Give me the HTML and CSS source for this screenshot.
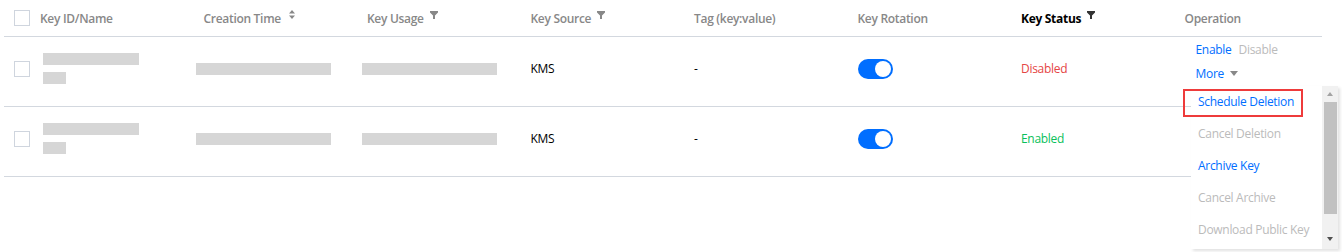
FILE: index.html
```html
<!DOCTYPE html>
<html lang="en">
<head>
    <meta charset="UTF-8" />
    <title>Key List</title>
    <link rel="stylesheet" href="styles.css">
</head>
<body>
    <div class="page">
        <div class="key-table">
            <!-- Header -->
            <div class="row head">
                <div class="cell check"><span class="checkbox"></span></div>
                <div class="cell">Key ID/Name</div>
                <div class="cell">Creation Time
                    <svg class="icon sort" width="6" height="9" viewBox="0 0 6 9"><path d="M3 0 L6 3.6 H0 Z M0 5.4 H6 L3 9 Z" /></svg>
                </div>
                <div class="cell">Key Usage
                    <svg class="icon filter" width="8" height="8" viewBox="0 0 8 8"><path d="M0 0 H8 V1.4 L5 4.4 V8 H3 V4.4 L0 1.4 Z" /></svg>
                </div>
                <div class="cell">Key Source
                    <svg class="icon filter" width="8" height="8" viewBox="0 0 8 8"><path d="M0 0 H8 V1.4 L5 4.4 V8 H3 V4.4 L0 1.4 Z" /></svg>
                </div>
                <div class="cell">Tag (key:value)</div>
                <div class="cell">Key Rotation</div>
                <div class="cell active">Key Status
                    <svg class="icon filter" width="8" height="8" viewBox="0 0 8 8"><path d="M0 0 H8 V1.4 L5 4.4 V8 H3 V4.4 L0 1.4 Z" /></svg>
                </div>
                <div class="cell">Operation</div>
            </div>

            <!-- Row 1 -->
            <div class="row">
                <div class="cell check"><span class="checkbox"></span></div>
                <div class="cell">
                    <div class="name-block">
                        <span class="blur w96"></span>
                        <span class="blur w23"></span>
                    </div>
                </div>
                <div class="cell"><span class="blur w135 shift8"></span></div>
                <div class="cell"><span class="blur w135 shift5"></span></div>
                <div class="cell">KMS</div>
                <div class="cell">-</div>
                <div class="cell"><span class="switch"></span></div>
                <div class="cell status-off">Disabled</div>
                <div class="cell ops">
                    <div class="ops-line"><a class="link">Enable</a><span class="link-off">Disable</span></div>
                    <div class="ops-line"><a class="link">More</a><span class="caret"></span></div>
                </div>
            </div>

            <!-- Row 2 (operation cell sits under the open menu) -->
            <div class="row">
                <div class="cell check"><span class="checkbox"></span></div>
                <div class="cell">
                    <div class="name-block">
                        <span class="blur w96"></span>
                        <span class="blur w23"></span>
                    </div>
                </div>
                <div class="cell"><span class="blur w135 shift8"></span></div>
                <div class="cell"><span class="blur w135 shift5"></span></div>
                <div class="cell">KMS</div>
                <div class="cell">-</div>
                <div class="cell"><span class="switch"></span></div>
                <div class="cell status-on">Enabled</div>
                <div class="cell ops"></div>
            </div>
        </div>

        <!-- "More" dropdown menu -->
        <div class="menu">
            <ul class="menu-list">
                <li class="menu-item marked">Schedule Deletion</li>
                <li class="menu-item off">Cancel Deletion</li>
                <li class="menu-item">Archive Key</li>
                <li class="menu-item off">Cancel Archive</li>
                <li class="menu-item off">Download Public Key</li>
            </ul>
            <div class="scrollbar">
                <span class="arrow up"></span>
                <span class="thumb"></span>
                <span class="arrow down"></span>
            </div>
        </div>
    </div>
</body>
</html>
```

FILE: styles.css
```css
/* Variables */
:root {
    --blue: #006eff;
    --red: #e54545;
    --green: #0abf5b;
    --line: #d3d8df;
    --head-text: #888888;
    --muted: #bbbbbb;
    --font: 'Segoe UI', 'Open Sans', 'Noto Sans', sans-serif;
}

*, *::before, *::after {
    box-sizing: border-box;
    margin: 0;
    padding: 0;
}

body {
    font-family: var(--font);
    font-size: 12px;
    letter-spacing: -0.3px;
    color: #000;
    background: #fff;
    -webkit-font-smoothing: antialiased;
}

.page {
    position: relative;
    width: 1342px;
    height: 252px;
    padding-left: 4px;
    overflow: hidden;
}

/* Table */
.key-table {
    width: 1318px;
}

.row {
    display: grid;
    grid-template-columns: 36px repeat(7, 163.5px) 1fr;
    align-items: center;
    height: 70px;
    border-bottom: 1px solid var(--line);
}

.row.head {
    height: 37px;
    align-items: stretch;
}

.cell {
    display: flex;
    align-items: center;
    white-space: nowrap;
    padding-bottom: 6px;
}

.head .cell {
    padding-bottom: 0;
    color: var(--head-text);
    font-weight: 600;
}

.head .cell.active {
    color: #000;
    font-weight: 700;
}

.cell.check {
    padding-left: 10px;
}

.checkbox {
    display: inline-block;
    width: 16px;
    height: 16px;
    border: 1px solid #cfd5de;
    background: #fff;
}

.icon {
    margin-left: 6px;
    align-self: flex-start;
    margin-top: 11px;
    fill: var(--head-text);
}

.icon.sort {
    margin-left: 8px;
    margin-top: 10px;
}

.head .cell.active .icon {
    fill: #333;
}

/* Blurred placeholders */
.name-block {
    display: flex;
    flex-direction: column;
    gap: 7px;
    padding-left: 3px;
}

.blur {
    display: block;
    height: 12px;
    background: #d6d6d6;
}

.w96 { width: 96px; }
.w23 { width: 23px; }
.w135 { width: 135px; }
.shift8 { margin-left: -8px; }
.shift5 { margin-left: -5px; }

/* Switch */
.switch {
    position: relative;
    display: inline-block;
    width: 35px;
    height: 20px;
    border-radius: 10px;
    background: var(--blue);
}

.switch::after {
    content: "";
    position: absolute;
    top: 2px;
    right: 2px;
    width: 16px;
    height: 16px;
    border-radius: 50%;
    background: #fff;
}

.status-off { color: var(--red); }
.status-on { color: var(--green); }

/* Operation column */
.cell.ops {
    align-self: start;
    flex-direction: column;
    align-items: flex-start;
    padding: 0 0 0 11px;
}

.ops-line {
    display: flex;
    align-items: center;
    height: 24px;
}

.link {
    color: var(--blue);
    margin-right: 7px;
    cursor: pointer;
}

.link-off {
    color: var(--muted);
    margin-right: 7px;
}

.caret {
    width: 0;
    height: 0;
    margin-left: -1px;
    border-left: 4px solid transparent;
    border-right: 4px solid transparent;
    border-top: 5px solid #888;
}

/* Dropdown menu */
.menu {
    position: absolute;
    left: 1191px;
    top: 86px;
    width: 147px;
    height: 163px;
    display: flex;
    background: #fff;
    box-shadow: 2px 2px 3px rgba(0, 0, 0, 0.12);
}

.menu-list {
    flex: 1;
    list-style: none;
}

.menu-item {
    position: relative;
    height: 32px;
    line-height: 32px;
    padding-left: 7px;
    color: var(--blue);
    white-space: nowrap;
}

.menu-item.off {
    color: var(--muted);
}

/* red highlight around the first entry */
.menu-item.marked::before {
    content: "";
    position: absolute;
    left: -8px;
    top: 3px;
    width: 120px;
    height: 28px;
    border: 2px solid #ee3b3b;
}

.scrollbar {
    width: 16px;
    display: flex;
    flex-direction: column;
    align-items: center;
    background: #f1f1f1;
}

.arrow {
    width: 0;
    height: 0;
    border-left: 3.5px solid transparent;
    border-right: 3.5px solid transparent;
}

.arrow.up {
    margin: 6px 0 6px;
    border-bottom: 4px solid #a3a3a3;
}

.arrow.down {
    margin: 0 0 8px;
    border-top: 4px solid #505050;
}

.thumb {
    width: 13px;
    height: 112px;
    margin-bottom: 23px;
    background: #c1c1c1;
}
```
